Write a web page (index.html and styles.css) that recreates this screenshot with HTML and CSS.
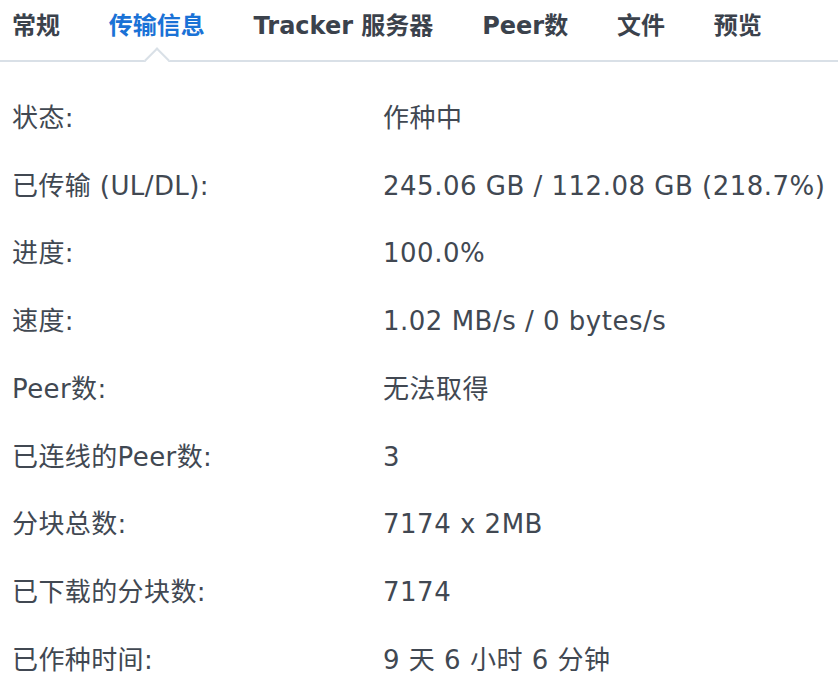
FILE: index.html
```html
<!DOCTYPE html>
<html lang="zh-CN">
<head>
<meta charset="utf-8">
<title>传输信息</title>
<link rel="stylesheet" href="styles.css">
</head>
<body>
<div class="tabs">
  <div class="tab">常规</div>
  <div class="tab active">传输信息</div>
  <div class="tab">Tracker 服务器</div>
  <div class="tab">Peer数</div>
  <div class="tab">文件</div>
  <div class="tab">预览</div>
</div>
<div class="info">
  <div class="label">状态:</div><div class="value">作种中</div>
  <div class="label">已传输 (UL/DL):</div><div class="value">245.06 GB / 112.08 GB (218.7%)</div>
  <div class="label">进度:</div><div class="value">100.0%</div>
  <div class="label">速度:</div><div class="value">1.02 MB/s / 0 bytes/s</div>
  <div class="label">Peer数:</div><div class="value">无法取得</div>
  <div class="label">已连线的Peer数:</div><div class="value">3</div>
  <div class="label">分块总数:</div><div class="value">7174 x 2MB</div>
  <div class="label">已下载的分块数:</div><div class="value">7174</div>
  <div class="label">已作种时间:</div><div class="value">9 天 6 小时 6 分钟</div>
</div>
</body>
</html>
```
FILE: styles.css
```css
html, body {
  margin: 0;
  padding: 0;
  background: #ffffff;
}
body {
  font-family: "DejaVu Sans", "Noto Sans CJK SC", sans-serif;
  color: #414852;
  width: 838px;
  height: 679px;
  overflow: hidden;
}
.tabs {
  display: flex;
  gap: 48.8px;
  padding-left: 12px;
  height: 60px;
  border-bottom: 2px solid #d9e0e7;
  position: relative;
}
.tab {
  font-size: 24px;
  font-weight: bold;
  color: #3b424c;
  line-height: 52px;
  position: relative;
  white-space: nowrap;
}
.tab.active {
  color: #1a72d6;
}
.tab.active::after {
  content: "";
  position: absolute;
  left: 50%;
  bottom: -9px;
  width: 16px;
  height: 16px;
  background: #ffffff;
  border-left: 2px solid #d9e0e7;
  border-top: 2px solid #d9e0e7;
  transform: translateX(-50%) rotate(45deg);
}
.info {
  display: grid;
  grid-template-columns: 371px 1fr;
  grid-auto-rows: 67.75px;
  padding: 22px 0 0 12px;
  font-size: 26px;
  align-items: center;
}
.label, .value {
  white-space: nowrap;
  line-height: 40px;
}
.label {
  letter-spacing: 0.4px;
}
.value {
  letter-spacing: 0.5px;
}
```
